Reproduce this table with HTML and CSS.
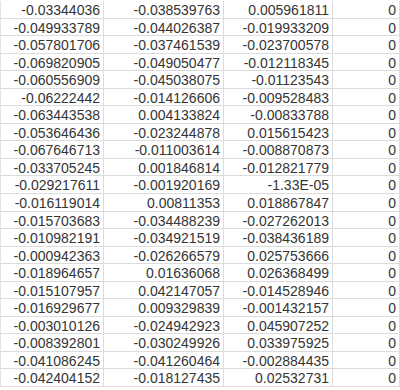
FILE: index.html
```html
<!DOCTYPE html>
<html>
<head>
<meta charset="utf-8">
<link rel="stylesheet" href="styles.css">
</head>
<body>
<div class="sheet" id="sheet">
<div class="c">-0.03344036</div><div class="c">-0.038539763</div><div class="c">0.005961811</div><div class="c">0</div>
<div class="c">-0.049933789</div><div class="c">-0.044026387</div><div class="c">-0.019933209</div><div class="c">0</div>
<div class="c">-0.057801706</div><div class="c">-0.037461539</div><div class="c">-0.023700578</div><div class="c">0</div>
<div class="c">-0.069820905</div><div class="c">-0.049050477</div><div class="c">-0.012118345</div><div class="c">0</div>
<div class="c">-0.060556909</div><div class="c">-0.045038075</div><div class="c">-0.01123543</div><div class="c">0</div>
<div class="c">-0.06222442</div><div class="c">-0.014126606</div><div class="c">-0.009528483</div><div class="c">0</div>
<div class="c">-0.063443538</div><div class="c">0.004133824</div><div class="c">-0.00833788</div><div class="c">0</div>
<div class="c">-0.053646436</div><div class="c">-0.023244878</div><div class="c">0.015615423</div><div class="c">0</div>
<div class="c">-0.067646713</div><div class="c">-0.011003614</div><div class="c">-0.008870873</div><div class="c">0</div>
<div class="c">-0.033705245</div><div class="c">0.001846814</div><div class="c">-0.012821779</div><div class="c">0</div>
<div class="c">-0.029217611</div><div class="c">-0.001920169</div><div class="c">-1.33E-05</div><div class="c">0</div>
<div class="c">-0.016119014</div><div class="c">0.00811353</div><div class="c">0.018867847</div><div class="c">0</div>
<div class="c">-0.015703683</div><div class="c">-0.034488239</div><div class="c">-0.027262013</div><div class="c">0</div>
<div class="c">-0.010982191</div><div class="c">-0.034921519</div><div class="c">-0.038436189</div><div class="c">0</div>
<div class="c">-0.000942363</div><div class="c">-0.026266579</div><div class="c">0.025753666</div><div class="c">0</div>
<div class="c">-0.018964657</div><div class="c">0.01636068</div><div class="c">0.026368499</div><div class="c">0</div>
<div class="c">-0.015107957</div><div class="c">0.042147057</div><div class="c">-0.014528946</div><div class="c">0</div>
<div class="c">-0.016929677</div><div class="c">0.009329839</div><div class="c">-0.001432157</div><div class="c">0</div>
<div class="c">-0.003010126</div><div class="c">-0.024942923</div><div class="c">0.045907252</div><div class="c">0</div>
<div class="c">-0.008392801</div><div class="c">-0.030249926</div><div class="c">0.033975925</div><div class="c">0</div>
<div class="c">-0.041086245</div><div class="c">-0.041260464</div><div class="c">-0.002884435</div><div class="c">0</div>
<div class="c">-0.042404152</div><div class="c">-0.018127435</div><div class="c">0.02532731</div><div class="c">0</div>
</div>
</body>
</html>
```
FILE: styles.css
```css
html, body {
  margin: 0;
  padding: 0;
  background: #ffffff;
  overflow: hidden;
}
.sheet {
  display: grid;
  grid-template-columns: 103px 120px 109px 67px;
  grid-auto-rows: 17.56px;
  width: 400px;
  box-sizing: border-box;
  margin-top: 1px;
  border-left: 1px solid #e2e2e2;
  font-family: "Liberation Sans", Arial, sans-serif;
  font-size: 14px;
  color: #353535;
}
.c {
  box-sizing: border-box;
  border-right: 1px solid #dcdcdc;
  border-bottom: 1px solid #dcdcdc;
  text-align: right;
  padding-right: 3px;
  padding-top: 1px;
  line-height: 16px;
  white-space: nowrap;
  overflow: hidden;
}
```
